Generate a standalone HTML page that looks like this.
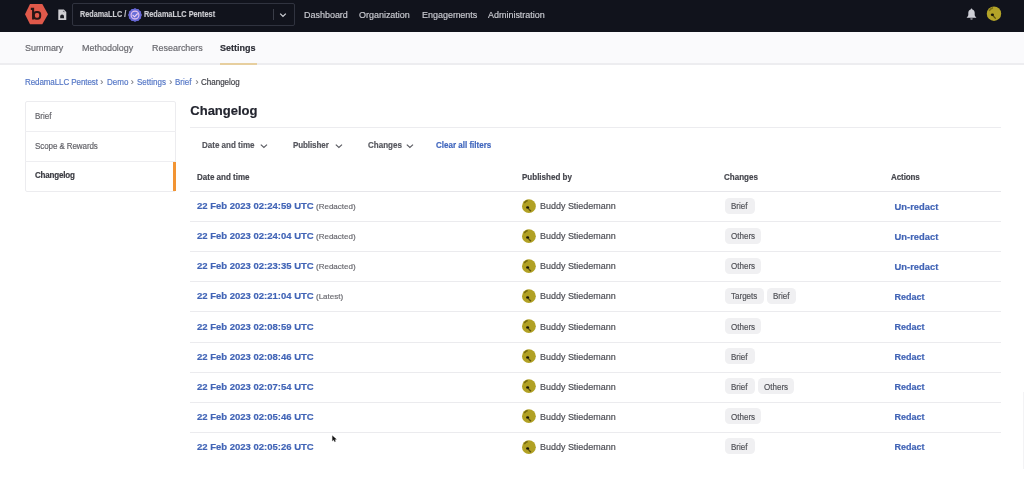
<!DOCTYPE html>
<html><head><meta charset="utf-8"><style>
html,body{margin:0;padding:0;width:1024px;height:488px;overflow:hidden;background:#fff;}
.t{position:absolute;white-space:nowrap;font-family:"Liberation Sans",sans-serif;-webkit-text-stroke-width:0.18px;}
.r{position:absolute;}
</style></head><body><div id="wrap" style="position:absolute;left:0;top:0;width:1024px;height:488px;overflow:hidden;will-change:transform;filter:blur(0.3px)">
<div class="r" style="left:0px;top:0px;width:1024px;height:32px;background:#11131c"></div>
<svg class="r" style="left:0;top:0" width="60" height="32" viewBox="0 0 60 32">
<polygon points="30,4 42.3,4 48,14.2 42.3,24.3 30,24.3 25,14.2" fill="#e0594a"/>
<path d="M30.8,8.9 h2.3 v10.5" stroke="#2a1716" stroke-width="2.1" fill="none"/>
<rect x="33.9" y="12" width="6.3" height="6.7" rx="2.6" stroke="#2a1716" stroke-width="2" fill="none"/>
</svg>
<svg class="r" style="left:56px;top:7px" width="14" height="15" viewBox="0 0 14 15">
<path d="M2.3,2.5 h5.6 l2.4,2.4 v8 h-8 z" fill="#cfcfd3"/>
<path d="M6.6,4 l1.5,-0.2 l0.5,1.6 z" fill="#4a4a52"/>
<path d="M4.2,11.2 h3.8 v-1.6 c0-1.2-0.8-2-1.9-2 c-1.1,0-1.9,0.8-1.9,2 z" fill="#1c1d24"/>
</svg>
<div class="r" style="left:72px;top:3px;width:223px;height:23px;border:1px solid #30333f;border-radius:2px;box-sizing:border-box"></div>
<div class="t" style="left:80px;top:10px;font-size:8.5px;line-height:8.5px;font-weight:700;color:#cbcbd0;transform:scaleX(0.85);transform-origin:0 0;">RedamaLLC /</div>
<svg class="r" style="left:128px;top:7.9px" width="14" height="14" viewBox="0 0 14 14">
<polygon points="14.00,7.00 13.09,8.63 13.06,10.50 11.45,11.45 10.50,13.06 8.63,13.09 7.00,14.00 5.37,13.09 3.50,13.06 2.55,11.45 0.94,10.50 0.91,8.63 0.00,7.00 0.91,5.37 0.94,3.50 2.55,2.55 3.50,0.94 5.37,0.91 7.00,0.00 8.63,0.91 10.50,0.94 11.45,2.55 13.06,3.50 13.09,5.37" fill="#6767d4"/>
<circle cx="7" cy="7" r="3.9" stroke="#e7c4ef" stroke-width="1.1" fill="#6a70d8"/>
<path d="M4.6,6.9 l1.9,1.9 l3.2,-3.3" stroke="#f2d2f4" stroke-width="1.1" fill="none"/>
</svg>
<div class="t" style="left:144px;top:10px;font-size:8.5px;line-height:8.5px;font-weight:700;color:#cbcbd0;transform:scaleX(0.86);transform-origin:0 0;">RedamaLLC Pentest</div>
<div class="r" style="left:273px;top:9px;width:1px;height:11px;background:#3a3d48"></div>
<svg class="r" style="left:278px;top:11px" width="10" height="8" viewBox="0 0 10 8">
<path d="M2.2,2.6 l2.8,2.8 l2.8,-2.8" stroke="#cfd0d6" stroke-width="1.3" fill="none"/>
</svg>
<div class="t" style="left:304px;top:10px;font-size:9.5px;line-height:9.5px;font-weight:400;color:#c9cad0;transform:scaleX(0.943);transform-origin:0 0;">Dashboard</div>
<div class="t" style="left:359.2px;top:10px;font-size:9.5px;line-height:9.5px;font-weight:400;color:#c9cad0;transform:scaleX(0.943);transform-origin:0 0;">Organization</div>
<div class="t" style="left:421.8px;top:10px;font-size:9.5px;line-height:9.5px;font-weight:400;color:#c9cad0;transform:scaleX(0.943);transform-origin:0 0;">Engagements</div>
<div class="t" style="left:488.2px;top:10px;font-size:9.5px;line-height:9.5px;font-weight:400;color:#c9cad0;transform:scaleX(0.943);transform-origin:0 0;">Administration</div>
<svg class="r" style="left:965px;top:7px" width="13" height="14" viewBox="0 0 13 14">
<path d="M6.5,1.6 c-0.5,0-0.8,0.3-0.8,0.8 c-1.6,0.4-2.4,1.8-2.4,3.4 v2.3 c0,0.8-0.7,1.5-1.5,2.1 v0.6 h9.4 v-0.6 c-0.8-0.6-1.5-1.3-1.5-2.1 v-2.3 c0-1.6-0.8-3-2.4-3.4 c0-0.5-0.3-0.8-0.8-0.8 z" fill="#cfd0d7"/>
<path d="M5.3,11.4 a1.2,1.2 0 0 0 2.4,0 z" fill="#cfd0d7"/>
</svg>
<svg class="r" style="left:985px;top:5px" width="18" height="18" viewBox="0 0 18 18">
<circle cx="9" cy="8.7" r="7.2" fill="#b4a428"/>
<path d="M4.2,6 c0.9-1.7 2.2-2.8 3.8-3.2" stroke="#7d7014" stroke-width="1.5" fill="none"/>
<path d="M7.4,10 l3.3,3.6" stroke="#5e5410" stroke-width="1.3" fill="none"/>
<ellipse cx="7.4" cy="9.8" rx="1.6" ry="1.3" fill="#17150a"/>
</svg>
<div class="r" style="left:0px;top:32px;width:1024px;height:31px;background:#fafafc"></div>
<div class="r" style="left:0px;top:63px;width:1024px;height:2px;background:#ededf0"></div>
<div class="t" style="left:25.3px;top:43px;font-size:9.5px;line-height:9.5px;font-weight:400;color:#68686e;transform:scaleX(0.943);transform-origin:0 0;">Summary</div>
<div class="t" style="left:81.5px;top:43px;font-size:9.5px;line-height:9.5px;font-weight:400;color:#68686e;transform:scaleX(0.943);transform-origin:0 0;">Methodology</div>
<div class="t" style="left:152.3px;top:43px;font-size:9.5px;line-height:9.5px;font-weight:400;color:#68686e;transform:scaleX(0.943);transform-origin:0 0;">Researchers</div>
<div class="t" style="left:220.3px;top:43px;font-size:9.4px;line-height:9.4px;font-weight:700;color:#2c2d36;transform:scaleX(0.962);transform-origin:0 0;">Settings</div>
<div class="r" style="left:219.5px;top:63px;width:37px;height:2px;background:#e7cf9f"></div>
<div class="t" style="left:25.3px;top:78px;font-size:8.5px;line-height:8.5px;font-weight:400;color:#5577c6;letter-spacing:-0.1px;transform:scaleX(0.943);transform-origin:0 0;">RedamaLLC Pentest</div>
<div class="t" style="left:100.3px;top:78px;font-size:9.0px;line-height:9.0px;font-weight:400;color:#77777d;">›</div>
<div class="t" style="left:106.8px;top:78px;font-size:8.5px;line-height:8.5px;font-weight:400;color:#5577c6;transform:scaleX(0.943);transform-origin:0 0;">Demo</div>
<div class="t" style="left:130.8px;top:78px;font-size:9.0px;line-height:9.0px;font-weight:400;color:#77777d;">›</div>
<div class="t" style="left:136.8px;top:78px;font-size:8.5px;line-height:8.5px;font-weight:400;color:#5577c6;transform:scaleX(0.943);transform-origin:0 0;">Settings</div>
<div class="t" style="left:169.3px;top:78px;font-size:9.0px;line-height:9.0px;font-weight:400;color:#77777d;">›</div>
<div class="t" style="left:175.1px;top:78px;font-size:8.5px;line-height:8.5px;font-weight:400;color:#5577c6;transform:scaleX(0.943);transform-origin:0 0;">Brief</div>
<div class="t" style="left:195.5px;top:78px;font-size:9.0px;line-height:9.0px;font-weight:400;color:#77777d;">›</div>
<div class="t" style="left:200.9px;top:78px;font-size:8.5px;line-height:8.5px;font-weight:400;color:#3d3e45;transform:scaleX(0.943);transform-origin:0 0;">Changelog</div>
<div class="r" style="left:25px;top:101px;width:151px;height:91px;border:1px solid #ececef;border-radius:2px;box-sizing:border-box;background:#fff"></div>
<div class="r" style="left:25px;top:131px;width:151px;height:1px;background:#eeeef1"></div>
<div class="r" style="left:25px;top:161px;width:151px;height:1px;background:#eeeef1"></div>
<div class="t" style="left:34.9px;top:112px;font-size:8.5px;line-height:8.5px;font-weight:400;color:#636369;transform:scaleX(0.943);transform-origin:0 0;">Brief</div>
<div class="t" style="left:34.9px;top:142px;font-size:8.5px;line-height:8.5px;font-weight:400;color:#636369;letter-spacing:-0.1px;transform:scaleX(0.943);transform-origin:0 0;">Scope &amp; Rewards</div>
<div class="t" style="left:34.9px;top:171px;font-size:8.5px;line-height:8.5px;font-weight:700;color:#393a41;letter-spacing:-0.2px;transform:scaleX(0.943);transform-origin:0 0;">Changelog</div>
<div class="r" style="left:173px;top:161.5px;width:3px;height:29.5px;background:#f29433"></div>
<div class="t" style="left:190.3px;top:104px;font-size:13.0px;line-height:13.0px;font-weight:700;color:#23252f;">Changelog</div>
<div class="r" style="left:190px;top:127px;width:811px;height:1px;background:#ececef"></div>
<div class="t" style="left:202.3px;top:141px;font-size:8.5px;line-height:8.5px;font-weight:700;color:#55565d;transform:scaleX(0.943);transform-origin:0 0;">Date and time</div>
<div class="t" style="left:293.4px;top:141px;font-size:8.5px;line-height:8.5px;font-weight:700;color:#55565d;letter-spacing:-0.1px;transform:scaleX(0.943);transform-origin:0 0;">Publisher</div>
<div class="t" style="left:367.9px;top:141px;font-size:8.5px;line-height:8.5px;font-weight:700;color:#55565d;transform:scaleX(0.943);transform-origin:0 0;">Changes</div>
<div class="t" style="left:435.5px;top:141px;font-size:8.5px;line-height:8.5px;font-weight:700;color:#4066bd;transform:scaleX(0.943);transform-origin:0 0;">Clear all filters</div>
<svg class="r" style="left:259.2px;top:141px" width="10" height="8" viewBox="0 0 10 8">
<path d="M1.8,3.6 l3.1,2.9 l3.1,-2.9" stroke="#5a5b62" stroke-width="1.15" fill="none"/>
</svg>
<svg class="r" style="left:333.8px;top:141px" width="10" height="8" viewBox="0 0 10 8">
<path d="M1.8,3.6 l3.1,2.9 l3.1,-2.9" stroke="#5a5b62" stroke-width="1.15" fill="none"/>
</svg>
<svg class="r" style="left:405.2px;top:141px" width="10" height="8" viewBox="0 0 10 8">
<path d="M1.8,3.6 l3.1,2.9 l3.1,-2.9" stroke="#5a5b62" stroke-width="1.15" fill="none"/>
</svg>
<div class="t" style="left:196.8px;top:173px;font-size:8.5px;line-height:8.5px;font-weight:700;color:#45464d;transform:scaleX(0.943);transform-origin:0 0;">Date and time</div>
<div class="t" style="left:522.3px;top:173px;font-size:8.5px;line-height:8.5px;font-weight:700;color:#45464d;transform:scaleX(0.943);transform-origin:0 0;">Published by</div>
<div class="t" style="left:724.4px;top:173px;font-size:8.5px;line-height:8.5px;font-weight:700;color:#45464d;transform:scaleX(0.943);transform-origin:0 0;">Changes</div>
<div class="t" style="left:890.8px;top:173px;font-size:8.5px;line-height:8.5px;font-weight:700;color:#45464d;letter-spacing:-0.1px;transform:scaleX(0.943);transform-origin:0 0;">Actions</div>
<div class="r" style="left:190px;top:191px;width:811px;height:1px;background:#e6e6ea"></div>
<div class="t" style="left:197px;top:201px;font-size:9.5px;line-height:9.5px;font-weight:700;color:#4164b6;">22 Feb 2023 02:24:59 UTC</div>
<div class="t" style="left:316px;top:203px;font-size:8.0px;line-height:8.0px;font-weight:400;color:#6a6a70;">(Redacted)</div>
<svg class="r" style="left:521px;top:197.7px" width="16" height="16" viewBox="0 0 16 16">
<circle cx="7.9" cy="8.2" r="6.9" fill="#b1a124"/>
<path d="M3.3,5.2 c0.8-1.4 2-2.3 3.4-2.6" stroke="#75690f" stroke-width="1.5" fill="none"/>
<path d="M6.6,9.6 l3.2,3.6" stroke="#5e5410" stroke-width="1.3" fill="none"/>
<ellipse cx="6.6" cy="9.4" rx="1.5" ry="1.2" fill="#17150a"/>
</svg>
<div class="t" style="left:540.2px;top:201px;font-size:9.5px;line-height:9.5px;font-weight:400;color:#4a4b52;transform:scaleX(0.943);transform-origin:0 0;">Buddy Stiedemann</div>
<div class="r" style="left:725px;top:198px;width:29.6px;height:16px;background:#f0f0f2;border-radius:4.5px"></div>
<div class="t" style="left:731.2px;top:202px;font-size:8.5px;line-height:8.5px;font-weight:400;color:#505157;transform:scaleX(0.943);transform-origin:0 0;">Brief</div>
<div class="t" style="left:894.6px;top:202px;font-size:9.4px;line-height:9.4px;font-weight:700;color:#4164b6;">Un-redact</div>
<div class="r" style="left:190px;top:221px;width:811px;height:1px;background:#ebebee"></div>
<div class="t" style="left:197px;top:231px;font-size:9.5px;line-height:9.5px;font-weight:700;color:#4164b6;">22 Feb 2023 02:24:04 UTC</div>
<div class="t" style="left:316px;top:233px;font-size:8.0px;line-height:8.0px;font-weight:400;color:#6a6a70;">(Redacted)</div>
<svg class="r" style="left:521px;top:227.8px" width="16" height="16" viewBox="0 0 16 16">
<circle cx="7.9" cy="8.2" r="6.9" fill="#b1a124"/>
<path d="M3.3,5.2 c0.8-1.4 2-2.3 3.4-2.6" stroke="#75690f" stroke-width="1.5" fill="none"/>
<path d="M6.6,9.6 l3.2,3.6" stroke="#5e5410" stroke-width="1.3" fill="none"/>
<ellipse cx="6.6" cy="9.4" rx="1.5" ry="1.2" fill="#17150a"/>
</svg>
<div class="t" style="left:540.2px;top:231px;font-size:9.5px;line-height:9.5px;font-weight:400;color:#4a4b52;transform:scaleX(0.943);transform-origin:0 0;">Buddy Stiedemann</div>
<div class="r" style="left:725px;top:228px;width:36.4px;height:16px;background:#f0f0f2;border-radius:4.5px"></div>
<div class="t" style="left:731.2px;top:232px;font-size:8.5px;line-height:8.5px;font-weight:400;color:#505157;transform:scaleX(0.943);transform-origin:0 0;">Others</div>
<div class="t" style="left:894.6px;top:232px;font-size:9.4px;line-height:9.4px;font-weight:700;color:#4164b6;">Un-redact</div>
<div class="r" style="left:190px;top:251px;width:811px;height:1px;background:#ebebee"></div>
<div class="t" style="left:197px;top:261px;font-size:9.5px;line-height:9.5px;font-weight:700;color:#4164b6;">22 Feb 2023 02:23:35 UTC</div>
<div class="t" style="left:316px;top:263px;font-size:8.0px;line-height:8.0px;font-weight:400;color:#6a6a70;">(Redacted)</div>
<svg class="r" style="left:521px;top:257.9px" width="16" height="16" viewBox="0 0 16 16">
<circle cx="7.9" cy="8.2" r="6.9" fill="#b1a124"/>
<path d="M3.3,5.2 c0.8-1.4 2-2.3 3.4-2.6" stroke="#75690f" stroke-width="1.5" fill="none"/>
<path d="M6.6,9.6 l3.2,3.6" stroke="#5e5410" stroke-width="1.3" fill="none"/>
<ellipse cx="6.6" cy="9.4" rx="1.5" ry="1.2" fill="#17150a"/>
</svg>
<div class="t" style="left:540.2px;top:261px;font-size:9.5px;line-height:9.5px;font-weight:400;color:#4a4b52;transform:scaleX(0.943);transform-origin:0 0;">Buddy Stiedemann</div>
<div class="r" style="left:725px;top:258px;width:36.4px;height:16px;background:#f0f0f2;border-radius:4.5px"></div>
<div class="t" style="left:731.2px;top:262px;font-size:8.5px;line-height:8.5px;font-weight:400;color:#505157;transform:scaleX(0.943);transform-origin:0 0;">Others</div>
<div class="t" style="left:894.6px;top:262px;font-size:9.4px;line-height:9.4px;font-weight:700;color:#4164b6;">Un-redact</div>
<div class="r" style="left:190px;top:281px;width:811px;height:1px;background:#ebebee"></div>
<div class="t" style="left:197px;top:291px;font-size:9.5px;line-height:9.5px;font-weight:700;color:#4164b6;">22 Feb 2023 02:21:04 UTC</div>
<div class="t" style="left:316px;top:293px;font-size:8.0px;line-height:8.0px;font-weight:400;color:#6a6a70;">(Latest)</div>
<svg class="r" style="left:521px;top:288.0px" width="16" height="16" viewBox="0 0 16 16">
<circle cx="7.9" cy="8.2" r="6.9" fill="#b1a124"/>
<path d="M3.3,5.2 c0.8-1.4 2-2.3 3.4-2.6" stroke="#75690f" stroke-width="1.5" fill="none"/>
<path d="M6.6,9.6 l3.2,3.6" stroke="#5e5410" stroke-width="1.3" fill="none"/>
<ellipse cx="6.6" cy="9.4" rx="1.5" ry="1.2" fill="#17150a"/>
</svg>
<div class="t" style="left:540.2px;top:291px;font-size:9.5px;line-height:9.5px;font-weight:400;color:#4a4b52;transform:scaleX(0.943);transform-origin:0 0;">Buddy Stiedemann</div>
<div class="r" style="left:725px;top:288px;width:38.8px;height:16px;background:#f0f0f2;border-radius:4.5px"></div>
<div class="t" style="left:731.2px;top:292px;font-size:8.5px;line-height:8.5px;font-weight:400;color:#505157;transform:scaleX(0.943);transform-origin:0 0;">Targets</div>
<div class="r" style="left:766.8px;top:288px;width:29.6px;height:16px;background:#f0f0f2;border-radius:4.5px"></div>
<div class="t" style="left:773.0px;top:292px;font-size:8.5px;line-height:8.5px;font-weight:400;color:#505157;transform:scaleX(0.943);transform-origin:0 0;">Brief</div>
<div class="t" style="left:894.6px;top:293px;font-size:9.0px;line-height:9.0px;font-weight:700;color:#4164b6;">Redact</div>
<div class="r" style="left:190px;top:311px;width:811px;height:1px;background:#ebebee"></div>
<div class="t" style="left:197px;top:322px;font-size:9.5px;line-height:9.5px;font-weight:700;color:#4164b6;">22 Feb 2023 02:08:59 UTC</div>
<svg class="r" style="left:521px;top:318.1px" width="16" height="16" viewBox="0 0 16 16">
<circle cx="7.9" cy="8.2" r="6.9" fill="#b1a124"/>
<path d="M3.3,5.2 c0.8-1.4 2-2.3 3.4-2.6" stroke="#75690f" stroke-width="1.5" fill="none"/>
<path d="M6.6,9.6 l3.2,3.6" stroke="#5e5410" stroke-width="1.3" fill="none"/>
<ellipse cx="6.6" cy="9.4" rx="1.5" ry="1.2" fill="#17150a"/>
</svg>
<div class="t" style="left:540.2px;top:322px;font-size:9.5px;line-height:9.5px;font-weight:400;color:#4a4b52;transform:scaleX(0.943);transform-origin:0 0;">Buddy Stiedemann</div>
<div class="r" style="left:725px;top:318px;width:36.4px;height:16px;background:#f0f0f2;border-radius:4.5px"></div>
<div class="t" style="left:731.2px;top:323px;font-size:8.5px;line-height:8.5px;font-weight:400;color:#505157;transform:scaleX(0.943);transform-origin:0 0;">Others</div>
<div class="t" style="left:894.6px;top:323px;font-size:9.0px;line-height:9.0px;font-weight:700;color:#4164b6;">Redact</div>
<div class="r" style="left:190px;top:342px;width:811px;height:1px;background:#ebebee"></div>
<div class="t" style="left:197px;top:352px;font-size:9.5px;line-height:9.5px;font-weight:700;color:#4164b6;">22 Feb 2023 02:08:46 UTC</div>
<svg class="r" style="left:521px;top:348.2px" width="16" height="16" viewBox="0 0 16 16">
<circle cx="7.9" cy="8.2" r="6.9" fill="#b1a124"/>
<path d="M3.3,5.2 c0.8-1.4 2-2.3 3.4-2.6" stroke="#75690f" stroke-width="1.5" fill="none"/>
<path d="M6.6,9.6 l3.2,3.6" stroke="#5e5410" stroke-width="1.3" fill="none"/>
<ellipse cx="6.6" cy="9.4" rx="1.5" ry="1.2" fill="#17150a"/>
</svg>
<div class="t" style="left:540.2px;top:352px;font-size:9.5px;line-height:9.5px;font-weight:400;color:#4a4b52;transform:scaleX(0.943);transform-origin:0 0;">Buddy Stiedemann</div>
<div class="r" style="left:725px;top:348px;width:29.6px;height:16px;background:#f0f0f2;border-radius:4.5px"></div>
<div class="t" style="left:731.2px;top:353px;font-size:8.5px;line-height:8.5px;font-weight:400;color:#505157;transform:scaleX(0.943);transform-origin:0 0;">Brief</div>
<div class="t" style="left:894.6px;top:353px;font-size:9.0px;line-height:9.0px;font-weight:700;color:#4164b6;">Redact</div>
<div class="r" style="left:190px;top:372px;width:811px;height:1px;background:#ebebee"></div>
<div class="t" style="left:197px;top:382px;font-size:9.5px;line-height:9.5px;font-weight:700;color:#4164b6;">22 Feb 2023 02:07:54 UTC</div>
<svg class="r" style="left:521px;top:378.3px" width="16" height="16" viewBox="0 0 16 16">
<circle cx="7.9" cy="8.2" r="6.9" fill="#b1a124"/>
<path d="M3.3,5.2 c0.8-1.4 2-2.3 3.4-2.6" stroke="#75690f" stroke-width="1.5" fill="none"/>
<path d="M6.6,9.6 l3.2,3.6" stroke="#5e5410" stroke-width="1.3" fill="none"/>
<ellipse cx="6.6" cy="9.4" rx="1.5" ry="1.2" fill="#17150a"/>
</svg>
<div class="t" style="left:540.2px;top:382px;font-size:9.5px;line-height:9.5px;font-weight:400;color:#4a4b52;transform:scaleX(0.943);transform-origin:0 0;">Buddy Stiedemann</div>
<div class="r" style="left:725px;top:378px;width:29.6px;height:16px;background:#f0f0f2;border-radius:4.5px"></div>
<div class="t" style="left:731.2px;top:383px;font-size:8.5px;line-height:8.5px;font-weight:400;color:#505157;transform:scaleX(0.943);transform-origin:0 0;">Brief</div>
<div class="r" style="left:757.6px;top:378px;width:36.4px;height:16px;background:#f0f0f2;border-radius:4.5px"></div>
<div class="t" style="left:763.8000000000001px;top:383px;font-size:8.5px;line-height:8.5px;font-weight:400;color:#505157;transform:scaleX(0.943);transform-origin:0 0;">Others</div>
<div class="t" style="left:894.6px;top:383px;font-size:9.0px;line-height:9.0px;font-weight:700;color:#4164b6;">Redact</div>
<div class="r" style="left:190px;top:402px;width:811px;height:1px;background:#ebebee"></div>
<div class="t" style="left:197px;top:412px;font-size:9.5px;line-height:9.5px;font-weight:700;color:#4164b6;">22 Feb 2023 02:05:46 UTC</div>
<svg class="r" style="left:521px;top:408.4px" width="16" height="16" viewBox="0 0 16 16">
<circle cx="7.9" cy="8.2" r="6.9" fill="#b1a124"/>
<path d="M3.3,5.2 c0.8-1.4 2-2.3 3.4-2.6" stroke="#75690f" stroke-width="1.5" fill="none"/>
<path d="M6.6,9.6 l3.2,3.6" stroke="#5e5410" stroke-width="1.3" fill="none"/>
<ellipse cx="6.6" cy="9.4" rx="1.5" ry="1.2" fill="#17150a"/>
</svg>
<div class="t" style="left:540.2px;top:412px;font-size:9.5px;line-height:9.5px;font-weight:400;color:#4a4b52;transform:scaleX(0.943);transform-origin:0 0;">Buddy Stiedemann</div>
<div class="r" style="left:725px;top:408px;width:36.4px;height:16px;background:#f0f0f2;border-radius:4.5px"></div>
<div class="t" style="left:731.2px;top:413px;font-size:8.5px;line-height:8.5px;font-weight:400;color:#505157;transform:scaleX(0.943);transform-origin:0 0;">Others</div>
<div class="t" style="left:894.6px;top:413px;font-size:9.0px;line-height:9.0px;font-weight:700;color:#4164b6;">Redact</div>
<div class="r" style="left:190px;top:432px;width:811px;height:1px;background:#ebebee"></div>
<div class="t" style="left:197px;top:442px;font-size:9.5px;line-height:9.5px;font-weight:700;color:#4164b6;">22 Feb 2023 02:05:26 UTC</div>
<svg class="r" style="left:521px;top:438.5px" width="16" height="16" viewBox="0 0 16 16">
<circle cx="7.9" cy="8.2" r="6.9" fill="#b1a124"/>
<path d="M3.3,5.2 c0.8-1.4 2-2.3 3.4-2.6" stroke="#75690f" stroke-width="1.5" fill="none"/>
<path d="M6.6,9.6 l3.2,3.6" stroke="#5e5410" stroke-width="1.3" fill="none"/>
<ellipse cx="6.6" cy="9.4" rx="1.5" ry="1.2" fill="#17150a"/>
</svg>
<div class="t" style="left:540.2px;top:442px;font-size:9.5px;line-height:9.5px;font-weight:400;color:#4a4b52;transform:scaleX(0.943);transform-origin:0 0;">Buddy Stiedemann</div>
<div class="r" style="left:725px;top:438px;width:29.6px;height:16px;background:#f0f0f2;border-radius:4.5px"></div>
<div class="t" style="left:731.2px;top:443px;font-size:8.5px;line-height:8.5px;font-weight:400;color:#505157;transform:scaleX(0.943);transform-origin:0 0;">Brief</div>
<div class="t" style="left:894.6px;top:443px;font-size:9.0px;line-height:9.0px;font-weight:700;color:#4164b6;">Redact</div>
<div class="r" style="left:1023px;top:392px;width:1px;height:77px;background:#f3f3f5"></div>
<svg class="r" style="left:331px;top:433.6px" width="7" height="9" viewBox="0 0 10 12">
<path d="M2,2 l0,7.5 l1.8,-1.7 l1.5,2.8 l1.2,-0.6 l-1.4,-2.7 l2.6,-0.1 z" fill="#111" stroke="#222" stroke-width="0.4"/>
</svg>
</div></body></html>
